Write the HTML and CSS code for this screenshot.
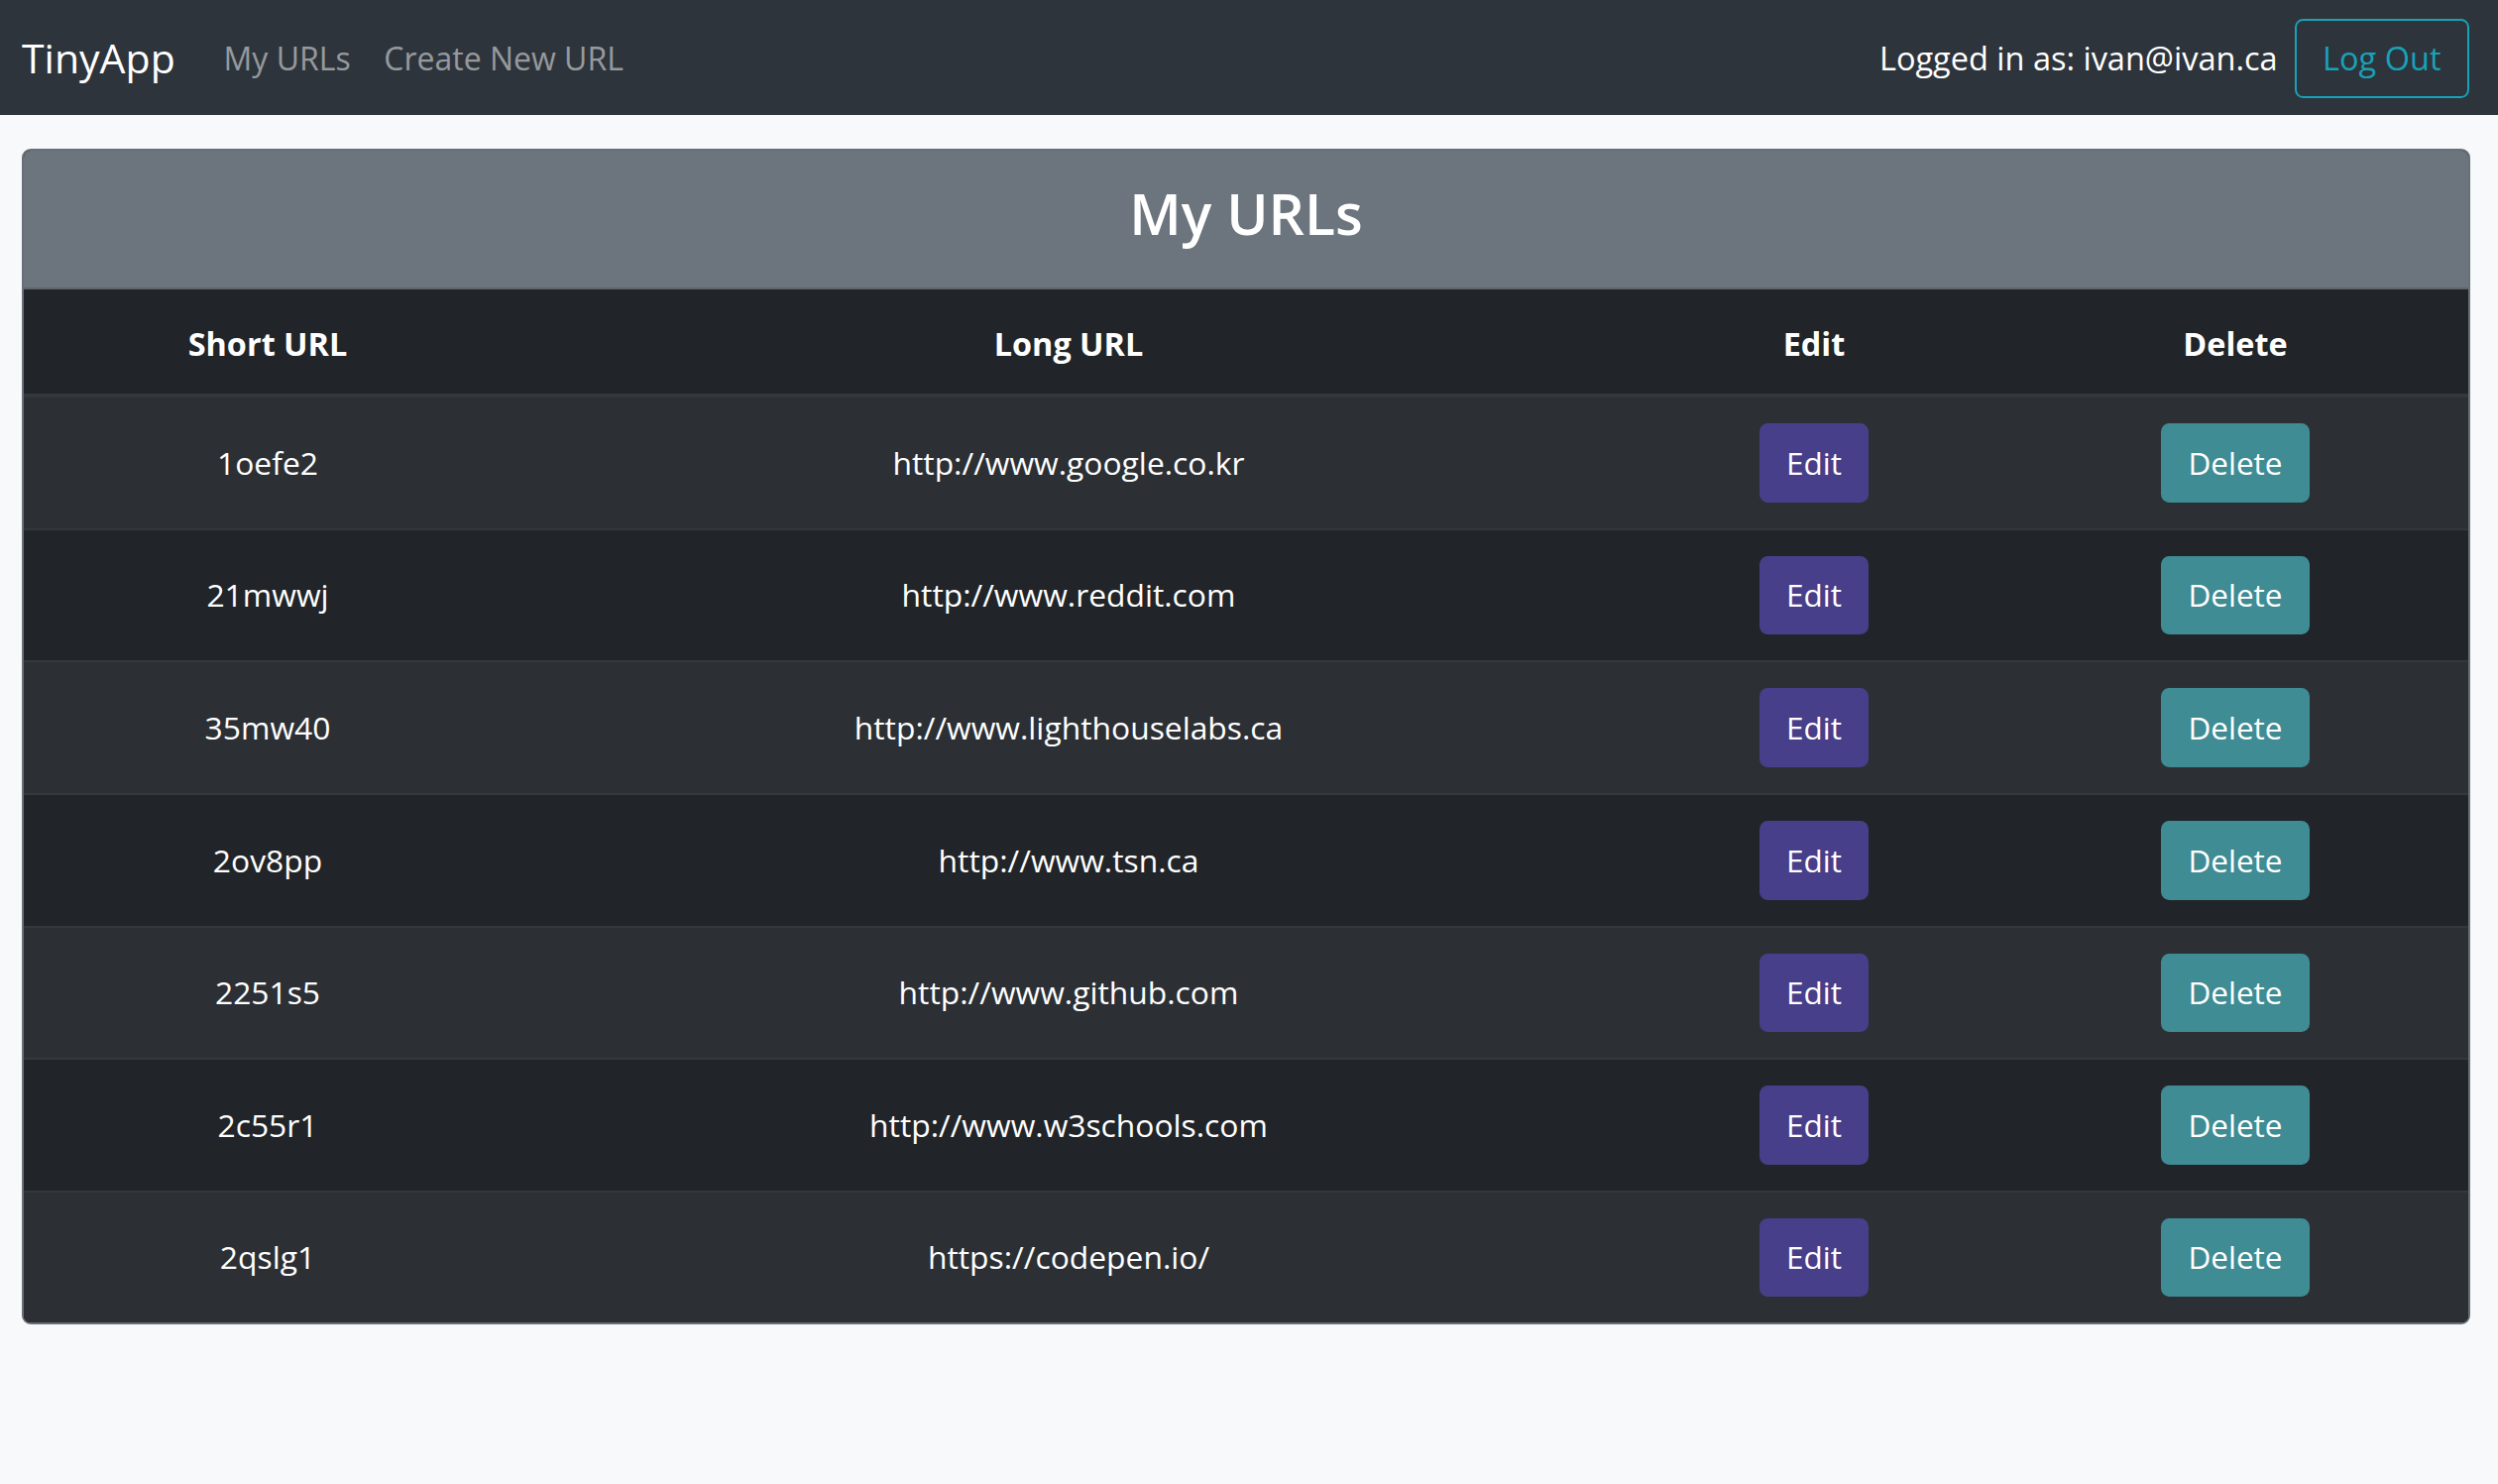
FILE: index.html
```html
<!DOCTYPE html>
<html lang="en">
<head>
<meta charset="utf-8">
<title>TinyApp</title>
<link rel="stylesheet" href="styles.css">
</head>
<body>
<nav class="navbar">
  <a class="brand" href="#">TinyApp</a>
  <div class="nav-links">
    <a class="nav-link" href="#">My URLs</a>
    <a class="nav-link" href="#">Create New URL</a>
  </div>
  <div class="nav-right">
    <span class="nav-text">Logged in as: ivan@ivan.ca</span>
    <button class="btn btn-outline">Log Out</button>
  </div>
</nav>
<main class="content">
  <section class="card">
    <header class="card-header">
      <h3 class="card-title">My URLs</h3>
    </header>
    <table class="url-table">
      <colgroup>
        <col class="c1"><col class="c2"><col class="c3"><col class="c4">
      </colgroup>
      <thead>
        <tr><th>Short URL</th><th>Long URL</th><th>Edit</th><th>Delete</th></tr>
      </thead>
      <tbody>
        <tr><td>1oefe2</td><td>http://www.google.co.kr</td><td><button class="btn btn-edit">Edit</button></td><td><button class="btn btn-delete">Delete</button></td></tr>
        <tr><td>21mwwj</td><td>http://www.reddit.com</td><td><button class="btn btn-edit">Edit</button></td><td><button class="btn btn-delete">Delete</button></td></tr>
        <tr><td>35mw40</td><td>http://www.lighthouselabs.ca</td><td><button class="btn btn-edit">Edit</button></td><td><button class="btn btn-delete">Delete</button></td></tr>
        <tr><td>2ov8pp</td><td>http://www.tsn.ca</td><td><button class="btn btn-edit">Edit</button></td><td><button class="btn btn-delete">Delete</button></td></tr>
        <tr><td>2251s5</td><td>http://www.github.com</td><td><button class="btn btn-edit">Edit</button></td><td><button class="btn btn-delete">Delete</button></td></tr>
        <tr><td>2c55r1</td><td>http://www.w3schools.com</td><td><button class="btn btn-edit">Edit</button></td><td><button class="btn btn-delete">Delete</button></td></tr>
        <tr><td>2qslg1</td><td>https://codepen.io/</td><td><button class="btn btn-edit">Edit</button></td><td><button class="btn btn-delete">Delete</button></td></tr>
      </tbody>
    </table>
  </section>
</main>
</body>
</html>
```
FILE: styles.css
```css
* { box-sizing: border-box; }

body {
  margin: 0;
  background: #f8f9fa;
  font-family: "Open Sans", "Noto Sans", "Liberation Sans", sans-serif;
  font-size: 32px;
  line-height: 1.5;
  color: #212529;
  min-height: 1497px;
}

.navbar {
  display: flex;
  align-items: center;
  height: 116px;
  padding: 2px 29px 0 22px;
  background: #2e343b;
  font-size: 32.5px;
}

.brand {
  color: #fff;
  text-decoration: none;
  font-size: 41px;
  margin-right: 32px;
}

.nav-links {
  display: flex;
  flex: 1;
  font-size: 32px;
}

.nav-link {
  color: rgba(255, 255, 255, 0.5);
  text-decoration: none;
  padding: 0 16.8px;
}

.nav-right {
  display: flex;
  align-items: center;
  gap: 17px;
}

.nav-text {
  color: #fff;
}

.btn {
  display: inline-block;
  font-family: inherit;
  font-size: 31.5px;
  line-height: 50.4px;
  padding: 12.6px 25.2px;
  border: 2px solid transparent;
  border-radius: 8.4px;
  color: #fff;
  cursor: pointer;
}

.btn-outline {
  background: transparent;
  border-color: #17a2b8;
  color: #17a2b8;
  font-size: 32.5px;
  padding: 12.6px 26.5px;
}

.btn-edit {
  background: #483f8a;
  border-color: #483f8a;
}

.btn-delete {
  background: #3f8c94;
  border-color: #3f8c94;
}

.content {
  padding: 34px 28px 0 22px;
}

.card {
  border: 2px solid #686f76;
  border-radius: 9px;
  overflow: hidden;
  background: #212529;
}

.card-header {
  background: #6c757d;
  padding: 28px 42px 25.2px;
  border-bottom: 2px solid #5d646b;
}

.card-title {
  margin: 0 0 14px;
  font-size: 57px;
  font-weight: 600;
  line-height: 70.6px;
  color: #fff;
  text-align: center;
}

.url-table {
  width: 100%;
  border-collapse: collapse;
  table-layout: fixed;
  color: #fff;
  background: #212529;
  text-align: center;
}

.c1 { width: 492px; }
.c2 { width: 1124px; }
.c3 { width: 380px; }
.c4 { width: 470px; }

.url-table th {
  padding: 29.5px 25.2px 25.5px;
  font-size: 32.4px;
  font-weight: 700;
  line-height: 50.4px;
  border-bottom: 4px solid #32383e;
}

.url-table td {
  padding: 26px 25.2px;
  font-size: 31.8px;
  line-height: 50.4px;
  vertical-align: middle;
  border-top: 2px solid #32383e;
}

.url-table tbody tr:nth-child(odd) {
  background: #2c3035;
}
```
